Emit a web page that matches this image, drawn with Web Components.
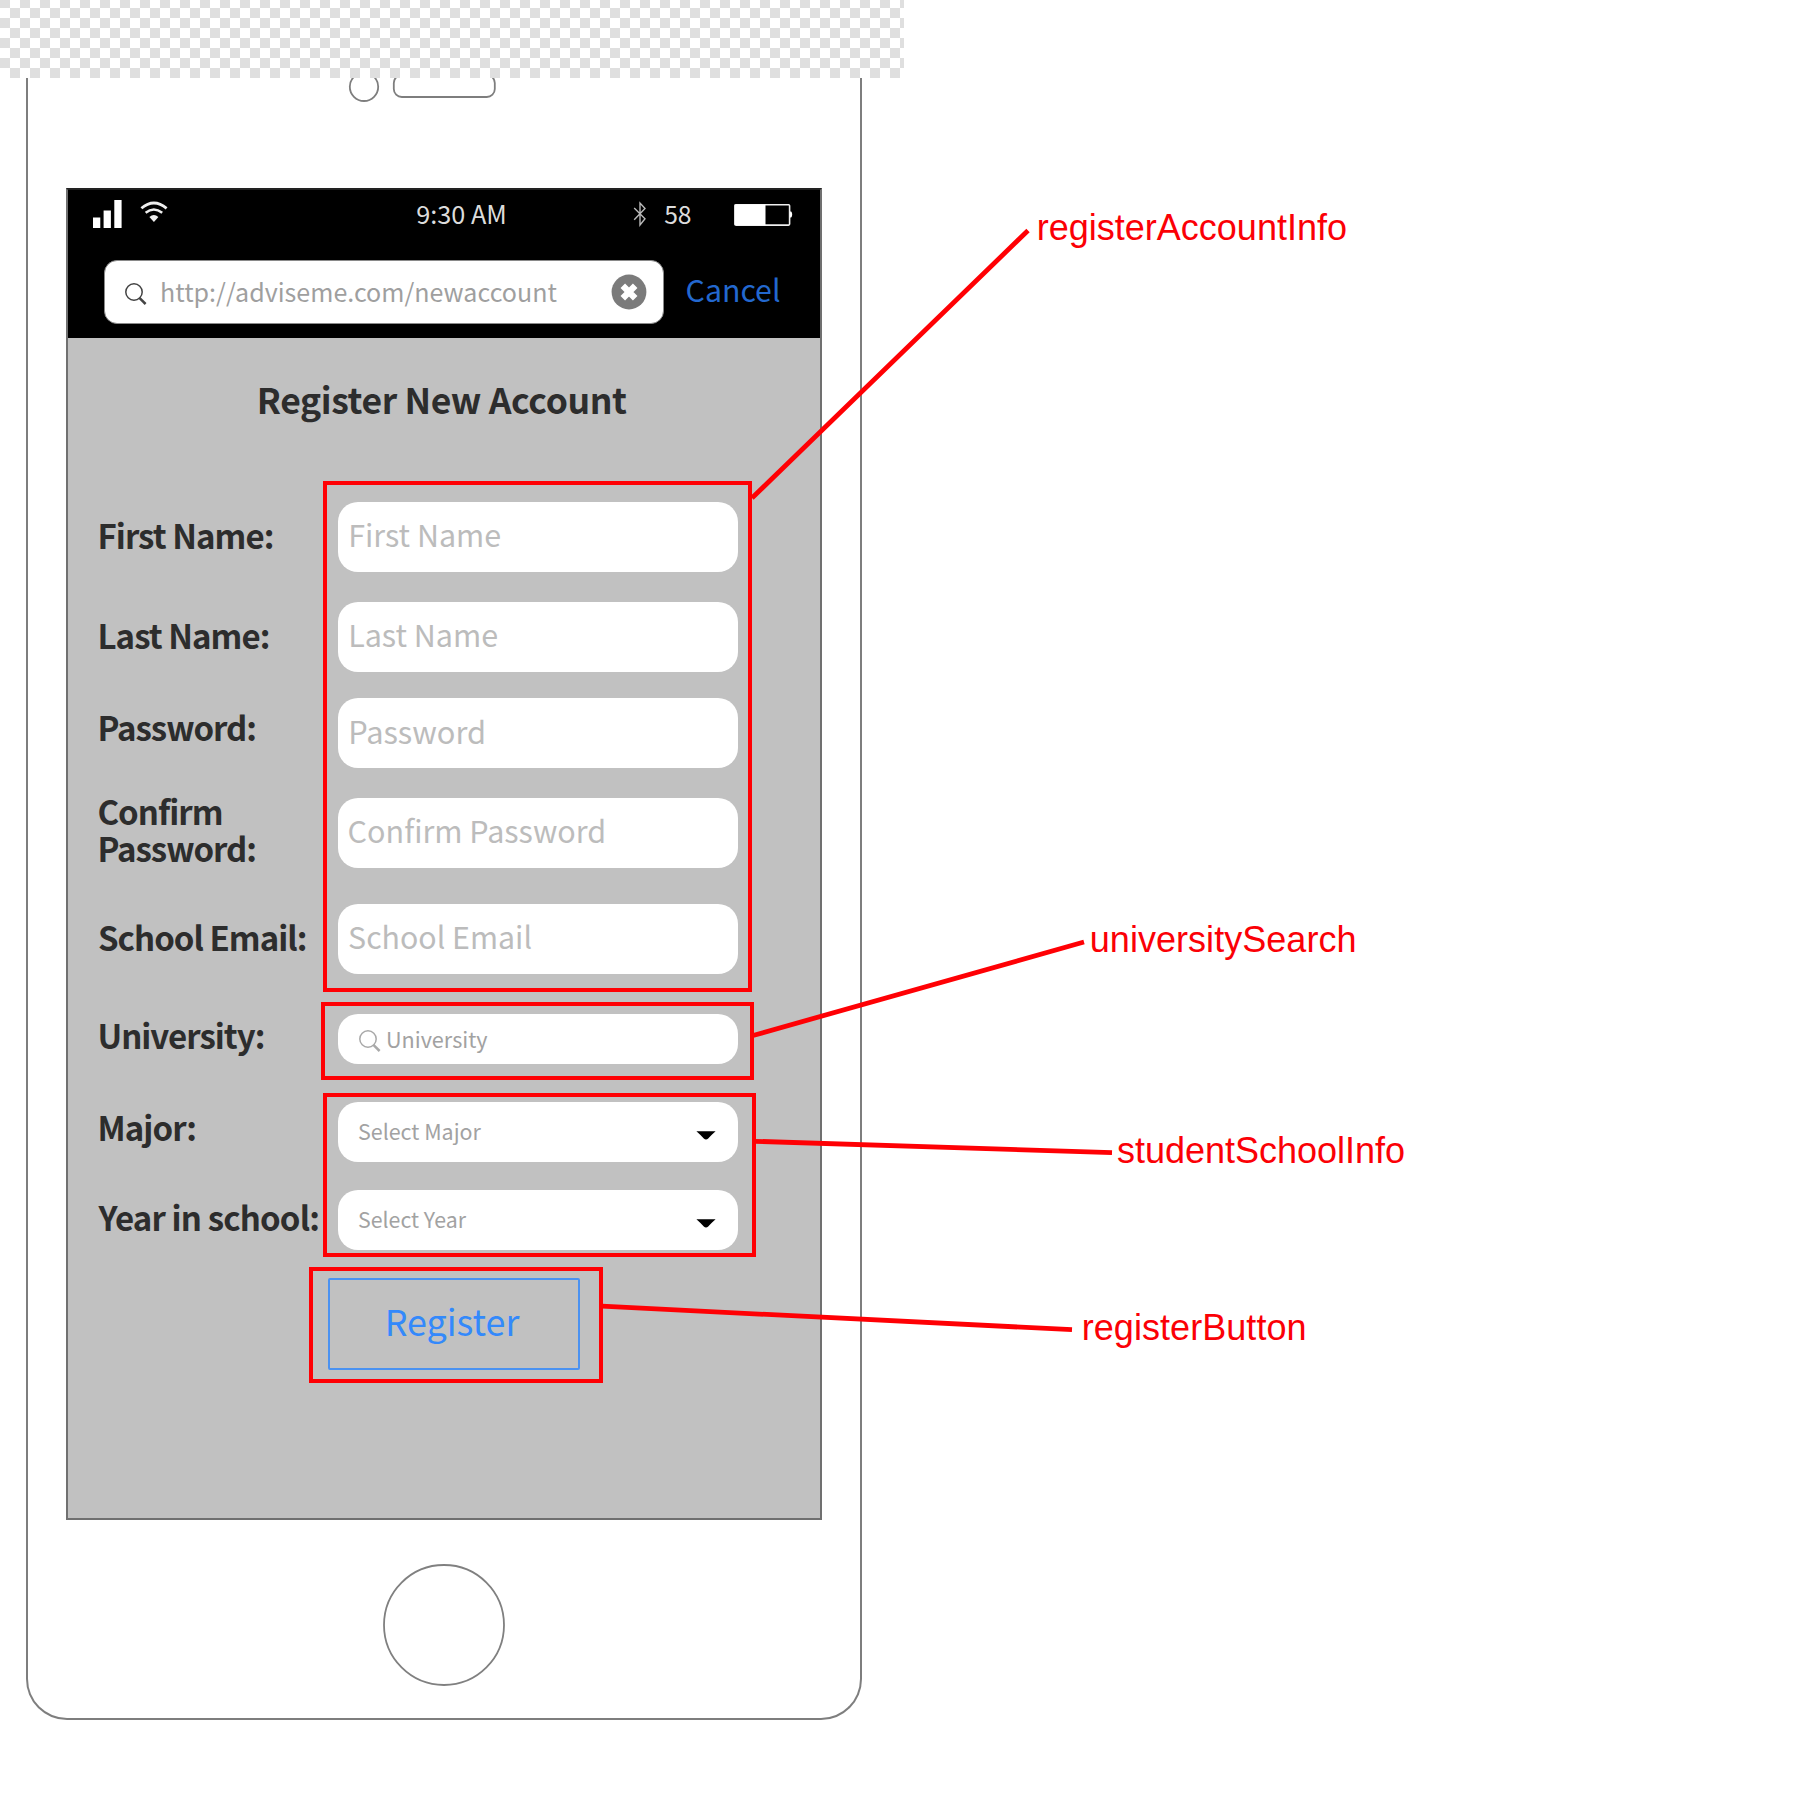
<!DOCTYPE html>
<html lang="en">
<head>
<meta charset="utf-8">
<title>Register New Account</title>
<style>
html,body{margin:0;padding:0;background:#fff}
body{width:1808px;height:1814px;overflow:hidden;font-family:"Noto Sans CJK SC","Noto Sans",sans-serif}
</style>
</head>
<body>
<wire-board></wire-board>
<script>
const define=(name,html,ready)=>{
  const t=document.createElement('template');t.innerHTML=html;
  customElements.define(name,class extends HTMLElement{
    constructor(){super();this.attachShadow({mode:'open'}).append(t.content.cloneNode(true));}
    connectedCallback(){if(ready)ready.call(this,this.shadowRoot);}
  });
};
const ctx=document.createElement('canvas').getContext('2d');

/* One line of text whose box is its cap height; w is the ink width it fills. */
define('cap-text',`<style>
:host{display:flow-root;flex:none;color:inherit}
span{display:block;white-space:pre;width:max-content}
</style><span><slot></slot></span>`,function(root){
  const w=+this.getAttribute('w'),fixed=+this.getAttribute('size');
  const cs=getComputedStyle(this),weight=cs.fontWeight,fam=cs.fontFamily;
  const txt=this.textContent,span=root.querySelector('span');
  ctx.font=`${weight} 400px ${fam}`;
  let m=ctx.measureText(txt);
  const nat=m.actualBoundingBoxLeft+m.actualBoundingBoxRight,left=m.actualBoundingBoxLeft;
  const size=fixed||w/nat*400;
  const ls=fixed?(w-nat*size/400)/(txt.length-1):0;
  ctx.font=`${weight} ${size}px ${fam}`;
  m=ctx.measureText(txt);
  const cap=Math.round(ctx.measureText('H').actualBoundingBoxAscent);
  const A=Math.round(m.fontBoundingBoxAscent),D=Math.round(m.fontBoundingBoxDescent);
  span.style.cssText=`font-size:${size}px;line-height:${A+D}px;letter-spacing:${ls}px;margin-top:${cap-A}px;margin-left:${left*size/400}px;margin-bottom:${-D}px`;
  this.style.height=cap+'px';
  this.style.width=w+'px';
});

define('search-icon',`<style>:host{display:block;flex:none;width:24px;height:24px;color:#444}svg{display:block}</style>
<svg width="24" height="24" viewBox="0 0 24 24" fill="none" stroke="currentColor"><circle cx="10" cy="10" r="8.2" stroke-width="1.5"/><path d="M15.4 15.8 21.6 22" stroke-width="2.5"/></svg>`);

define('status-bar',`<style>
:host{display:flex;align-items:flex-start;height:69px;color:#dcdcdc}
svg{display:block;flex:none}
.sig{margin:8px 0 0 25px}.wifi{margin:9.500px 0 0 17px}.time{margin:15px 0 0 249px}
.bt{margin:10px 0 0 128px}.pct{margin:16px 0 0 18px}.bat{margin:12px 0 0 43px}
</style>
<svg class="sig" width="30" height="30" viewBox="0 0 30 30" fill="#fff"><path d="M0 19.5h7.3V30H0zM10.6 12.5h7.3V30h-7.3zM21.3 2h7.3v28h-7.3z"/></svg>
<svg class="wifi" width="28" height="24" viewBox="0 0 28 24" fill="none" stroke="#eee"><path d="M1.4 8.3Q13.8-2.2 26.6 8.3" stroke-width="2.8"/><path d="M5.6 12.8q8.2-6.6 16.6 0" stroke-width="2.5"/><path d="M9.4 17q4.5-3.8 9 0L13.9 22z" fill="#eee" stroke="none"/></svg>
<cap-text class="time" w="87.5">9:30 AM</cap-text>
<svg class="bt" width="14" height="28" viewBox="0 0 14 28" fill="none" stroke="#b8b8b8" stroke-width="1.4"><path d="M1.2 8 12 18.8 7 25V3l5 5.6L1.2 19.8"/></svg>
<cap-text class="pct" w="26">58</cap-text>
<svg class="bat" width="60" height="24" viewBox="0 0 60 24"><rect x="1" y="2.7" width="54.6" height="20.4" rx="1" fill="#000" stroke="#eee" stroke-width="1.6"/><path d="M.5 2.5h31v20.8H.5zM56 9.5h1.2q1 1 1 3t-1 3H56z" fill="#fff"/></svg>`);

define('address-bar',`<style>
:host{display:flex;align-items:flex-start;height:79px;padding-left:36px}
.box{box-sizing:border-box;width:560px;height:64px;margin-top:1px;border:1px solid #8a8a8a;border-radius:13px;background:#fff;display:flex;align-items:flex-start;color:#9f9f9f}
search-icon{margin:21px 0 0 19px}
.u{margin:22px 0 0 14px}
svg{display:block;margin:13px 0 0 54px}
.c{color:#2368cf;margin:21px 0 0 23px}
</style>
<div class="box"><search-icon></search-icon><cap-text class="u" w="395">http://adviseme.com/newaccount</cap-text>
<svg width="36" height="36" viewBox="0 0 36 36"><circle cx="18" cy="18" r="17.4" fill="#7b7b7b"/><path d="M11.8 11.8 24.2 24.2M24.2 11.8 11.8 24.2" stroke="#fff" stroke-width="6.4"/></svg></div>
<cap-text class="c" w="92.5">Cancel</cap-text>`);

define('form-row',`<style>
:host{display:flex;align-items:flex-start;padding-left:32px}
.label{width:238px;flex:none;color:#2d2d2d;font-weight:600;display:flex;flex-direction:column}
</style><div class="label"><slot name="label"></slot></div><slot></slot>`);

define('form-field',`<style>
:host{display:flex;align-items:flex-start;box-sizing:border-box;width:400px;height:var(--h,70px);border-radius:20px;background:#fff;padding:var(--p,23px 0 0 13px);color:#bcbcbc;font-weight:400}
:host([small]){color:#a2a2a2}
</style><slot></slot>`);

define('select-field',`<style>
:host{display:flex;align-items:flex-start;box-sizing:border-box;width:400px;height:60px;border-radius:20px;background:#fff;padding:21px 22px 0 21px;justify-content:space-between;color:#a2a2a2}
svg{display:block;margin-top:8px}
::slotted(*){margin-top:1px}
</style><slot></slot><svg width="20" height="9" viewBox="0 0 20 9"><path d="M.4.3h19.2Q16 3.500 12.2 7.4 10 9.4 7.8 7.4 4 3.500.4.3z"/></svg>`);

define('register-form',`<style>
:host{display:block}
.title{margin:50px 0 0 191.500px;color:#2d2d2d;font-weight:600}
.register{display:flex;align-items:flex-start;box-sizing:border-box;width:252px;height:92px;margin:28px 0 0 260px;border:2px solid #4b92f1;border-radius:2px;padding:30px 0 0 58px;color:#3389fb}
</style>
<cap-text class="title" w="367" size="35.5">Register New Account</cap-text>
<form-row style="margin-top:88px"><cap-text slot="label" style="margin-top:22px" w="172.5" size="33">First Name:</cap-text><form-field><cap-text w="149">First Name</cap-text></form-field></form-row>
<form-row style="margin-top:30px"><cap-text slot="label" style="margin-top:22px" w="168.5" size="33">Last Name:</cap-text><form-field><cap-text w="146">Last Name</cap-text></form-field></form-row>
<form-row style="margin-top:26px"><cap-text slot="label" style="margin-top:18px" w="155" size="33">Password:</cap-text><form-field><cap-text w="132.5">Password</cap-text></form-field></form-row>
<form-row style="margin-top:30px"><cap-text slot="label" style="margin-top:2px;margin-left:-1px" w="122" size="33">Confirm</cap-text><cap-text slot="label" style="margin-top:12px" w="155" size="33">Password:</cap-text><form-field style="--p:23px 0 0 11px"><cap-text w="254.5">Confirm Password</cap-text></form-field></form-row>
<form-row style="margin-top:36px"><cap-text slot="label" style="margin-top:22px;margin-left:-1px" w="206.5" size="33">School Email:</cap-text><form-field style="--p:23px 0 0 11.5px"><cap-text w="181.5">School Email</cap-text></form-field></form-row>
<form-row style="margin-top:40px"><cap-text slot="label" style="margin-top:10px" w="163.5" size="33">University:</cap-text><form-field small style="--h:50px;--p:15px 0 0 20px"><search-icon style="color:#a9a9a9"></search-icon><cap-text style="margin:3px 0 0 6px" w="99.5">University</cap-text></form-field></form-row>
<form-row style="margin-top:38px"><cap-text slot="label" style="margin-top:14px" w="95" size="33">Major:</cap-text><select-field><cap-text w="122">Select Major</cap-text></select-field></form-row>
<form-row style="margin-top:28px"><cap-text slot="label" style="margin-top:16px;margin-left:-2px" w="220" size="33">Year in school:</cap-text><select-field><cap-text w="107">Select Year</cap-text></select-field></form-row>
<div class="register"><cap-text w="131.5">Register</cap-text></div>`);

define('phone-screen',`<style>
:host{display:block;box-sizing:border-box;width:756px;height:1332px;border:2px solid #707070;border-top-color:#222;background:#c1c1c1}
header{background:#000;height:148px;box-sizing:border-box}
</style><header><status-bar></status-bar><address-bar></address-bar></header><register-form></register-form>`);

define('phone-frame',`<style>
:host{display:block;box-sizing:border-box;width:836px;height:1642px;margin-left:26px;border:2px solid #7e7e7e;border-top:0;border-radius:0 0 41px 41px;overflow:hidden}
svg{display:block}
.top{margin-left:312px}
phone-screen{margin-left:38px}
.home{margin:43px 0 0 354px}
</style>
<svg class="top" width="180" height="110" viewBox="340 78 180 110" fill="none" stroke="#7e7e7e" stroke-width="1.8"><circle cx="364" cy="86.8" r="14.2"/><rect x="393.8" y="75" width="101" height="22" rx="8"/></svg>
<phone-screen></phone-screen>
<svg class="home" width="124" height="124" viewBox="0 0 124 124" fill="none" stroke="#808080" stroke-width="1.8"><circle cx="62" cy="62" r="60"/></svg>`);

define('checker-strip',`<style>
:host{display:block;width:904px;height:78px}svg{display:block}
</style><svg width="904" height="78"><defs><pattern id="c" width="20" height="20" y="-2" patternUnits="userSpaceOnUse"><rect width="20" height="20" fill="#fff"/><path d="M0 0h10v10H0zM10 10h10v10H10z" fill="#dfdfdf"/></pattern></defs><rect width="904" height="78" fill="url(#c)"/></svg>`);

define('callout-layer',`<style>
:host{position:absolute;inset:0;color:#fb0006;font-family:"Liberation Sans",Arial,sans-serif}
svg{position:absolute;left:0;top:0}
cap-text{position:absolute}
</style>
<svg width="1808" height="1814" fill="none" stroke="#ff0004" stroke-width="4"><g shape-rendering="crispEdges"><path d="M325 483H750V990H325zM323 1004H752V1078H323zM325 1095H754V1255H325zM311 1269H601V1381H311z"/></g><path stroke-width="4.8" d="M752 498 1028 230.500M753 1035.500 1084 942M755 1141.300 1112 1152.700M602 1306.200 1072 1329.700"/></svg>
<cap-text style="left:1039px;top:214px" w="306.5" size="36">registerAccountInfo</cap-text>
<cap-text style="left:1092px;top:926px" w="262.5" size="36">universitySearch</cap-text>
<cap-text style="left:1117.500px;top:1137px" w="286" size="36">studentSchoolInfo</cap-text>
<cap-text style="left:1084px;top:1314px" w="220.500" size="36">registerButton</cap-text>`);

define('wire-board',`<style>
:host{display:block;position:relative;width:1808px;height:1814px;background:#fff;overflow:hidden}
</style><checker-strip></checker-strip><phone-frame></phone-frame><callout-layer></callout-layer>`);
</script>
</body>
</html>
